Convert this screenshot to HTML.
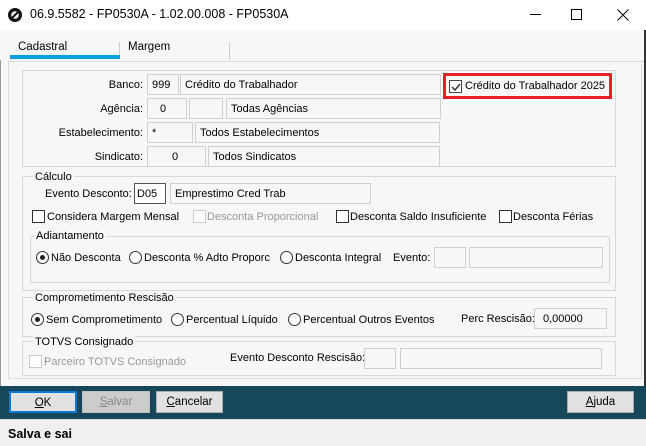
<!DOCTYPE html><html><head><meta charset="utf-8"><style>
*{box-sizing:border-box;margin:0;padding:0}
body{width:646px;height:446px;overflow:hidden;background:#f6f7f9;font-family:"Liberation Sans",sans-serif;font-size:11px;color:#000;position:relative}
.a{position:absolute;white-space:nowrap}
.box{position:absolute;border:1px solid #d0d0d0;background:#f6f7f9;padding:3px 0 0 4px;line-height:14px}
.grp{position:absolute;border:1px solid #d8d8d8}
.leg{position:absolute;background:#f6f7f9;padding:0 2px;line-height:12px}
.cb{position:absolute;width:13px;height:13px;border:1px solid #333;background:#fff}
.rd{position:absolute;width:13px;height:13px;border:1px solid #333;border-radius:50%;background:#fff}
.btn{position:absolute;top:391px;height:22px;border:1px solid #adadad;background:#e1e1e1;text-align:center;line-height:20px;font-size:11.5px}
</style></head><body>
<div class="a" style="left:0;top:0;width:646px;height:30px;background:#fff"></div>
<svg class="a" style="left:7px;top:7px" width="16" height="16" viewBox="0 0 16 16"><circle cx="8" cy="8" r="7" fill="#111"/><circle cx="8" cy="8" r="3.8" fill="#fff"/><path d="M5 11 L11 5" stroke="#111" stroke-width="2"/></svg>
<div class="a" style="left:30px;top:7px;font-size:12.5px">06.9.5582 - FP0530A - 1.02.00.008 - FP0530A</div>
<div class="a" style="left:530px;top:14px;width:11px;height:1px;background:#000"></div>
<div class="a" style="left:571px;top:9px;width:11px;height:11px;border:1px solid #000"></div>
<svg class="a" style="left:617px;top:9px" width="12" height="12"><path d="M0.5 0.5L11.5 11.5M11.5 0.5L0.5 11.5" stroke="#000"/></svg>
<div class="a" style="left:644px;top:30px;width:2px;height:356px;background:#333"></div>
<div class="a" style="left:0;top:60px;width:1px;height:326px;background:#999"></div>
<div class="a" style="left:18px;top:41px;font-size:11.5px">Cadastral</div>
<div class="a" style="left:10px;top:55px;width:110px;height:4px;background:#0aa0e0"></div>
<div class="a" style="left:119px;top:42px;width:1px;height:13px;background:#ccc"></div>
<div class="a" style="left:128px;top:41px;font-size:11.5px">Margem</div>
<div class="a" style="left:229px;top:42px;width:1px;height:18px;background:#ccc"></div>
<div class="a" style="left:230px;top:61px;width:414px;height:1px;background:#ccc"></div>
<div class="grp" style="left:8px;top:61px;width:634px;height:318px;border-color:#ddd"></div>
<div class="grp" style="left:22px;top:70px;width:594px;height:97px"></div>
<div class="a" style="right:503px;top:79px">Banco:</div>
<div class="box" style="left:147px;top:74px;width:32px;height:21px">999</div>
<div class="box" style="left:180px;top:74px;width:261px;height:21px">Crédito do Trabalhador</div>
<div class="a" style="left:443px;top:73px;width:169px;height:26px;border:3px solid #e8202a"></div>
<div class="cb" style="left:449px;top:80px;border-color:#444"></div>
<svg class="a" style="left:450px;top:81px" width="12" height="12"><path d="M2 6L5 9L10 3" stroke="#333" stroke-width="1.5" fill="none"/></svg>
<div class="a" style="left:465px;top:80px;font-size:11px">Crédito do Trabalhador 2025</div>
<div class="a" style="right:503px;top:103px">Agência:</div>
<div class="box" style="left:147px;top:98px;width:40px;height:21px;padding-left:12px">0</div>
<div class="box" style="left:189px;top:98px;width:34px;height:21px"></div>
<div class="box" style="left:226px;top:98px;width:215px;height:21px">Todas Agências</div>
<div class="a" style="right:503px;top:127px">Estabelecimento:</div>
<div class="box" style="left:147px;top:122px;width:46px;height:21px">*</div>
<div class="box" style="left:195px;top:122px;width:245px;height:21px">Todos Estabelecimentos</div>
<div class="a" style="right:503px;top:151px">Sindicato:</div>
<div class="box" style="left:147px;top:146px;width:59px;height:21px;padding-left:24px">0</div>
<div class="box" style="left:208px;top:146px;width:232px;height:21px">Todos Sindicatos</div>

<div class="grp" style="left:22px;top:176px;width:594px;height:115px"></div>
<div class="leg" style="left:33px;top:171px">Cálculo</div>
<div class="a" style="left:45px;top:188px">Evento Desconto:</div>
<div class="box" style="left:134px;top:183px;width:32px;height:21px;border-color:#555;background:#fff;padding-left:2px">D05</div>
<div class="box" style="left:170px;top:183px;width:201px;height:21px">Emprestimo Cred Trab</div>
<div class="cb" style="left:32px;top:210px"></div><div class="a" style="left:47px;top:211px">Considera Margem Mensal</div>
<div class="cb" style="left:193px;top:210px;border-color:#ccc"></div><div class="a" style="left:207px;top:211px;color:#999">Desconta Proporcional</div>
<div class="cb" style="left:336px;top:210px"></div><div class="a" style="left:350px;top:211px">Desconta Saldo Insuficiente</div>
<div class="cb" style="left:499px;top:210px"></div><div class="a" style="left:513px;top:211px">Desconta Férias</div>
<div class="grp" style="left:30px;top:236px;width:580px;height:47px"></div>
<div class="leg" style="left:34px;top:230px">Adiantamento</div>
<div class="rd" style="left:36px;top:251px"></div><div class="a" style="left:40px;top:255px;width:5px;height:5px;border-radius:50%;background:#222"></div>
<div class="a" style="left:51px;top:252px">Não Desconta</div>
<div class="rd" style="left:129px;top:251px"></div><div class="a" style="left:144px;top:252px">Desconta % Adto Proporc</div>
<div class="rd" style="left:280px;top:251px"></div><div class="a" style="left:295px;top:252px">Desconta Integral</div>
<div class="a" style="left:393px;top:252px">Evento:</div>
<div class="box" style="left:434px;top:247px;width:32px;height:21px"></div>
<div class="box" style="left:469px;top:247px;width:134px;height:21px"></div>

<div class="grp" style="left:22px;top:297px;width:594px;height:40px"></div>
<div class="leg" style="left:33px;top:292px">Comprometimento Rescisão</div>
<div class="rd" style="left:31px;top:313px"></div><div class="a" style="left:35px;top:317px;width:5px;height:5px;border-radius:50%;background:#222"></div>
<div class="a" style="left:46px;top:314px">Sem Comprometimento</div>
<div class="rd" style="left:171px;top:313px"></div><div class="a" style="left:186px;top:314px">Percentual Líquido</div>
<div class="rd" style="left:288px;top:313px"></div><div class="a" style="left:303px;top:314px">Percentual Outros Eventos</div>
<div class="a" style="left:461px;top:313px">Perc Rescisão:</div>
<div class="box" style="left:534px;top:308px;width:73px;height:21px;padding-left:8px">0,00000</div>

<div class="grp" style="left:22px;top:341px;width:594px;height:35px"></div>
<div class="leg" style="left:33px;top:336px">TOTVS Consignado</div>
<div class="cb" style="left:29px;top:355px;border-color:#ccc"></div><div class="a" style="left:44px;top:356px;color:#999">Parceiro TOTVS Consignado</div>
<div class="a" style="left:230px;top:352px">Evento Desconto Rescisão:</div>
<div class="box" style="left:364px;top:348px;width:32px;height:21px"></div>
<div class="box" style="left:400px;top:348px;width:202px;height:21px"></div>

<div class="a" style="left:0;top:386px;width:646px;height:33px;background:#17475a"></div>
<div class="btn" style="left:9px;width:68px;border:2px solid #0a78d7"><u>O</u>K</div>
<div class="btn" style="left:82px;width:68px;background:#cccccc;border-color:#bfbfbf;color:#888"><u>S</u>alvar</div>
<div class="btn" style="left:156px;width:67px"><u>C</u>ancelar</div>
<div class="btn" style="left:567px;width:67px"><u>A</u>juda</div>
<div class="a" style="left:0;top:419px;width:646px;height:27px;background:#f0f0f0;border-top:1px solid #ddd"></div>
<div class="a" style="left:8px;top:427px;font-weight:bold;font-size:12.5px">Salva e sai</div>
</body></html>
